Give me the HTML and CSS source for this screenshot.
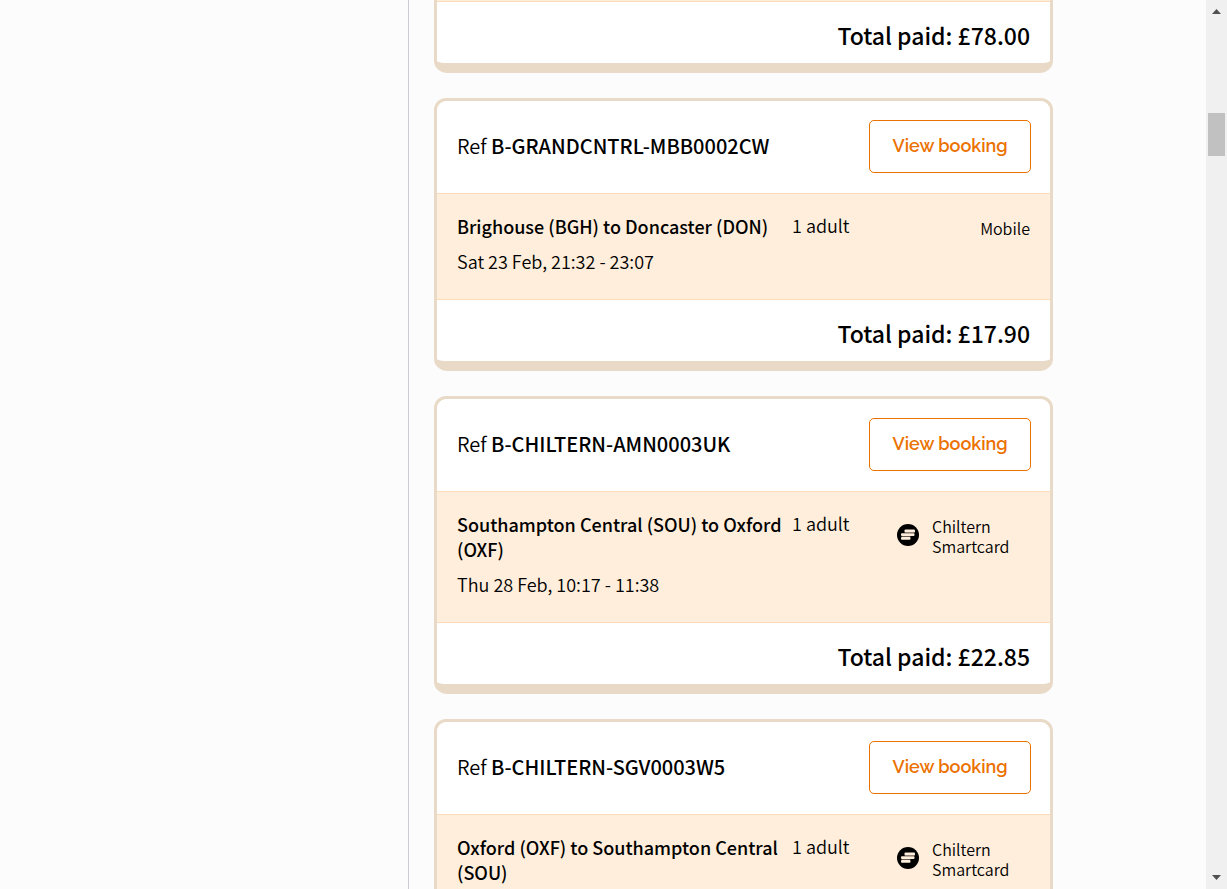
FILE: index.html
```html
<!DOCTYPE html>
<html lang="en">
<head>
<meta charset="utf-8">
<meta name="viewport" content="width=device-width, initial-scale=1">
<title>My bookings</title>
<link rel="stylesheet" href="styles.css">
</head>
<body>
<svg class="symbols" aria-hidden="true">
  <symbol id="smartcard" viewBox="0 0 22 22">
    <circle cx="11" cy="11" r="11" fill="#000"/>
    <g fill="#ffeedb">
      <rect x="7.5" y="5.6" width="10.5" height="2.8" rx="1"/>
      <rect x="4" y="9.3" width="13.5" height="2.8" rx="1"/>
      <rect x="4" y="13" width="9.5" height="2.8" rx="1"/>
    </g>
    <path d="M7.5 8.8H17.5M4.5 12.5H13.5" stroke="#a3968a" stroke-width=".6"/>
  </symbol>
</svg>
<div class="page">
  <aside class="side"></aside>
  <main class="bookings">
    <article class="card card-continued">
      <div class="trip trip-continued"></div>
      <p class="total">Total paid: £78.00</p>
    </article>

    <article class="card">
      <header class="card-head">
        <h2 class="ref">Ref <strong>B-GRANDCNTRL-MBB0002CW</strong></h2>
        <button class="view" type="button">View booking</button>
      </header>
      <div class="trip">
        <div class="journey">
          <h3 class="route">Brighouse (BGH) to Doncaster (DON)</h3>
          <p class="when">Sat 23 Feb, 21:32 - 23:07</p>
        </div>
        <p class="people">1 adult</p>
        <p class="ticket ticket-plain">Mobile</p>
      </div>
      <p class="total">Total paid: £17.90</p>
    </article>

    <article class="card">
      <header class="card-head">
        <h2 class="ref">Ref <strong>B-CHILTERN-AMN0003UK</strong></h2>
        <button class="view" type="button">View booking</button>
      </header>
      <div class="trip">
        <div class="journey">
          <h3 class="route">Southampton Central (SOU) to Oxford (OXF)</h3>
          <p class="when">Thu 28 Feb, 10:17 - 11:38</p>
        </div>
        <p class="people">1 adult</p>
        <p class="ticket"><svg class="card-icon" aria-hidden="true"><use href="#smartcard"/></svg><span>Chiltern Smartcard</span></p>
      </div>
      <p class="total">Total paid: £22.85</p>
    </article>

    <article class="card">
      <header class="card-head">
        <h2 class="ref">Ref <strong>B-CHILTERN-SGV0003W5</strong></h2>
        <button class="view" type="button">View booking</button>
      </header>
      <div class="trip">
        <div class="journey">
          <h3 class="route">Oxford (OXF) to Southampton Central (SOU)</h3>
        </div>
        <p class="people">1 adult</p>
        <p class="ticket"><svg class="card-icon" aria-hidden="true"><use href="#smartcard"/></svg><span>Chiltern Smartcard</span></p>
      </div>
    </article>
  </main>
  <div class="margin"></div>
  <div class="scrollbar" aria-hidden="true">
    <svg class="arrow" viewBox="0 0 9 5"><path d="M4.5 0L9 5H0Z" fill="#505050"/></svg>
    <div class="track"><div class="thumb"></div></div>
    <svg class="arrow" viewBox="0 0 9 5"><path d="M0 0H9L4.5 5Z" fill="#505050"/></svg>
  </div>
</div>
</body>
</html>
```
FILE: styles.css
```css
* {
  box-sizing: border-box;
}

body,
h2,
h3,
p {
  margin: 0;
}

body {
  background: #fcfcfc;
  color: #000;
  font-family: "Noto Sans CJK SC", "Noto Sans", sans-serif;
  font-size: 18px;
}

.symbols {
  position: absolute;
  width: 0;
  height: 0;
}

.page {
  display: grid;
  grid-template-columns: minmax(0, 409fr) minmax(0, 644fr) minmax(0, 153fr) 21px;
  height: 100vh;
  overflow: hidden;
}

.side {
  border-right: 1px solid #ccccd4;
}

.bookings {
  display: flex;
  flex-direction: column;
  gap: 25px;
  min-height: 0;
  padding-left: 25px;
}

.card {
  flex: none;
  background: #fff;
  border: 3px solid #e8dac6;
  border-bottom-width: 10px;
  border-radius: 12px 12px 14px 14px / 12px;
}

.card-continued {
  border-top: 0;
  border-top-left-radius: 0;
  border-top-right-radius: 0;
}

.card-head {
  display: flex;
  align-items: center;
  justify-content: space-between;
  height: 92px;
  padding: 0 19px 2px 20px;
}

.ref {
  font-size: 20px;
  font-weight: 350;
  line-height: 30px;
}

.ref strong {
  font-weight: 500;
}

.view {
  width: 162px;
  height: 53px;
  padding: 0 0 1px;
  background: #fff;
  border: 1px solid #eb7100;
  border-radius: 5px;
  color: #eb7100;
  font-family: Raleway, Lato, sans-serif;
  font-size: 18px;
  font-weight: 600;
}

.trip {
  display: grid;
  grid-template-columns: minmax(0, 335fr) minmax(0, 105fr) minmax(0, 133fr);
  padding: 20px 20px 25px;
  background: #ffeedb;
  border: solid #fbdcb8;
  border-width: 1px 0;
}

.trip-continued {
  height: 2px;
  padding: 0;
  border-top: 0;
}

.journey {
  display: grid;
  gap: 10px;
}

.route {
  font-size: 18px;
  font-weight: 500;
  line-height: 25px;
}

.when {
  font-weight: 350;
  line-height: 25px;
}

.people {
  font-weight: 350;
  line-height: 23px;
}

.ticket {
  display: flex;
  gap: 13px;
  padding-top: 4px;
  font-size: 16px;
  font-weight: 350;
  line-height: 20px;
}

.ticket-plain {
  justify-content: flex-end;
}

.card-icon {
  flex: none;
  width: 22px;
  height: 22px;
  margin-top: 8px;
}

.total {
  padding: 16px 20px 10px;
  font-size: 23px;
  font-weight: 500;
  line-height: 35px;
  text-align: right;
}

.scrollbar {
  display: flex;
  flex-direction: column;
  align-items: center;
  justify-content: space-between;
  padding: 9px 2px;
  background: #f0f0f0;
}

.arrow {
  flex: none;
  width: 9px;
  height: 5px;
}

.track {
  flex: 1;
  align-self: stretch;
  padding-top: 99px;
}

.thumb {
  height: 43px;
  background: #c1c1c1;
}
```
